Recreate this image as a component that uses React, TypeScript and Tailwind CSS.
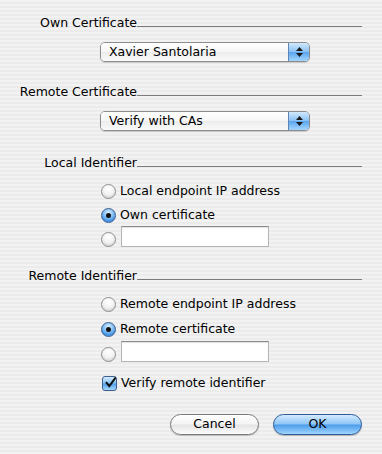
import React, { useState } from 'react';

const font = 'font-["DejaVu_Sans","Liberation_Sans",sans-serif]';

const SectionLabel: React.FC<{ text: string; className?: string }> = ({ text, className = '' }) => (
  <div className={`flex items-end h-4 pr-5 ${className}`}>
    <div className="w-[137px] shrink-0 text-right text-[12.5px] leading-4 text-black whitespace-nowrap">{text}</div>
    <div className="flex-1 h-px bg-[#7c7c7c] mb-[4px]"></div>
  </div>
);

const PopUp: React.FC<{ value: string; className?: string }> = ({ value, className = '' }) => (
  <div className={`ml-[100px] w-[210px] h-5 flex rounded-[5px] border border-[#8c8c8c] overflow-hidden shadow-[0_1px_1px_rgba(0,0,0,0.15)] ${className}`}>
    <div className="flex-1 flex items-center pl-2 text-[12.5px] text-black bg-[linear-gradient(180deg,#ffffff_0%,#f6f6f6_50%,#ececec_51%,#fafafa_100%)]">
      {value}
    </div>
    <div className="w-[21px] border-l border-[#5d85b8] flex flex-col items-center justify-center gap-[2px] bg-[linear-gradient(180deg,#d2e9fd_0%,#8bc2f3_48%,#5aa5ee_52%,#a4d6fd_100%)]">
      <svg width="7" height="4" viewBox="0 0 7 4"><polygon points="3.5,0 7,4 0,4" fill="#1b1b1b" /></svg>
      <svg width="7" height="4" viewBox="0 0 7 4"><polygon points="0,0 7,0 3.5,4" fill="#1b1b1b" /></svg>
    </div>
  </div>
);

const Radio: React.FC<{ checked?: boolean }> = ({ checked }) => (
  <div
    className={`w-[15px] h-[15px] rounded-full border shrink-0 flex items-center justify-center ${
      checked
        ? 'border-[#3d5f8f] bg-[radial-gradient(circle_at_50%_30%,#dff0ff_0%,#7fbdf3_45%,#3f8fe3_75%,#8fcaf9_100%)]'
        : 'border-[#8e8e8e] bg-[radial-gradient(circle_at_50%_30%,#ffffff_0%,#f2f2f2_50%,#d6d6d6_80%,#f4f4f4_100%)]'
    }`}
  >
    {checked && <div className="w-[5px] h-[5px] rounded-full bg-[#111]"></div>}
  </div>
);

const RadioRow: React.FC<{ label?: string; checked?: boolean; field?: boolean }> = ({ label, checked, field }) => (
  <div className="flex items-center h-6 pl-[101px]">
    <Radio checked={checked} />
    {label && <span className="ml-[4px] text-[12.5px] text-black whitespace-nowrap">{label}</span>}
    {field && (
      <input
        className="ml-[5px] w-[148px] h-[21px] -mt-[5px] bg-white border border-[#b5b5b5] border-t-[#8a8a8a] outline-none shadow-[inset_0_1px_1px_rgba(0,0,0,0.12)]"
        defaultValue=""
      />
    )}
  </div>
);

const App: React.FC = () => {
  const [verify, setVerify] = useState(true);

  return (
    <div className={`w-[382px] h-[454px] ${font} bg-[repeating-linear-gradient(180deg,#f2f2f2_0px,#f2f2f2_2px,#ebebeb_2px,#ebebeb_4px)] pt-[15px] select-none`}>
      <SectionLabel text="Own Certificate" />
      <PopUp value="Xavier Santolaria" className="mt-[11px]" />

      <SectionLabel text="Remote Certificate" className="mt-[22px]" />
      <PopUp value="Verify with CAs" className="mt-[11px]" />

      <SectionLabel text="Local Identifier" className="mt-[24px]" />
      <div className="mt-[8px]">
        <RadioRow label="Local endpoint IP address" />
        <RadioRow label="Own certificate" checked />
        <RadioRow field />
      </div>

      <SectionLabel text="Remote Identifier" className="mt-[17px]" />
      <div className="mt-[8px] flex flex-col gap-px">
        <RadioRow label="Remote endpoint IP address" />
        <RadioRow label="Remote certificate" checked />
        <RadioRow field />
      </div>

      <div className="flex items-center h-6 pl-[102px] mt-[5px]" onClick={() => setVerify(!verify)}>
        <div className="w-[15px] h-[15px] rounded-[3px] border border-[#3d5f8f] flex items-center justify-center bg-[linear-gradient(180deg,#d6ecff_0%,#86c0f3_48%,#4f9cea_52%,#a6d8fd_100%)]">
          {verify && (
            <svg width="14" height="13" viewBox="0 0 14 13" className="-mt-[2px] ml-[2px]">
              <path d="M2 7 L5.5 11 L13 1" fill="none" stroke="#111" strokeWidth="2.6" strokeLinecap="square" />
            </svg>
          )}
        </div>
        <span className="ml-[4px] text-[12.5px] text-black">Verify remote identifier</span>
      </div>

      <div className="flex justify-end gap-[14px] pr-5 mt-[19px]">
        <button className="w-[89px] h-[21px] rounded-full border border-[#7a7a7a] text-[12.5px] text-black bg-[linear-gradient(180deg,#ffffff_0%,#f4f4f4_48%,#e4e4e4_52%,#fbfbfb_100%)] shadow-[0_1px_1px_rgba(0,0,0,0.2)]">
          Cancel
        </button>
        <button className="w-[89px] h-[21px] rounded-full border border-[#2f5c99] text-[12.5px] text-black bg-[linear-gradient(180deg,#d3eaff_0%,#8dc5f5_48%,#4d9bea_52%,#9ed5fd_100%)] shadow-[0_1px_1px_rgba(0,0,0,0.25)]">
          OK
        </button>
      </div>
    </div>
  );
};

export default App;
